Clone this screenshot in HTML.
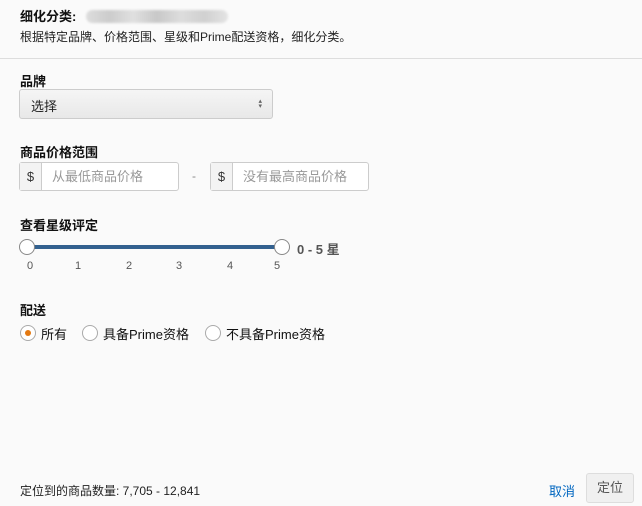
<!DOCTYPE html><html><head><meta charset="utf-8"><style>
body{margin:0;width:642px;height:506px;background:#fafafa;font-family:"Liberation Sans","Noto Sans CJK SC",sans-serif;color:#111;position:relative;overflow:hidden}
.a{position:absolute;white-space:nowrap}
.b{font-weight:bold;font-size:13px}
.in{position:absolute;height:29px;border:1px solid #ccc;border-radius:3px;background:#fff;box-sizing:border-box}
.in .d{position:absolute;left:0;top:0;bottom:0;width:21px;background:#f3f3f3;border-right:1px solid #ccc;font-size:13px;text-align:center;line-height:27px;color:#333}
.in .p{position:absolute;left:32px;top:0;line-height:27px;font-size:13px;color:#999}
.r{position:absolute;width:16px;height:16px;border:1px solid #aaa;border-radius:50%;background:#fff;box-sizing:border-box}
.n{position:absolute;top:260px;font-size:11px;color:#555}
</style></head><body>
<div class="a b" style="left:20px;top:6px">细化分类:</div>
<div class="a" style="left:86px;top:10px;width:142px;height:13px;border-radius:7px;background:linear-gradient(90deg,#ddd,#ccc,#e0e0e0,#c8c8c8,#ddd,#d0d0d0,#e4e4e4);filter:blur(1px)"></div>
<div class="a" style="left:20px;top:28px;font-size:12px;color:#222">根据特定品牌、价格范围、星级和Prime配送资格，细化分类。</div>
<div class="a" style="left:0;top:58px;width:642px;height:1px;background:#ddd"></div>
<div class="a b" style="left:20px;top:71px">品牌</div>
<div class="a" style="left:19px;top:89px;width:254px;height:30px;box-sizing:border-box;border:1px solid #ccc;border-radius:3px;background:linear-gradient(#f5f5f5,#e8e8e8)"><span class="a" style="left:11px;top:6px;font-size:13px;color:#222">选择</span><span class="a" style="right:10px;top:9px;font-size:7px;color:#666;line-height:5px">▴<br>▾</span></div>
<div class="a b" style="left:20px;top:142px">商品价格范围</div>
<div class="in" style="left:19px;top:162px;width:160px"><div class="d">$</div><div class="p">从最低商品价格</div></div>
<div class="a" style="left:192px;top:169px;font-size:12px;color:#888">-</div>
<div class="in" style="left:210px;top:162px;width:159px"><div class="d">$</div><div class="p">没有最高商品价格</div></div>
<div class="a b" style="left:20px;top:215px">查看星级评定</div>
<div class="a" style="left:27px;top:245px;width:255px;height:4px;background:#33618f"></div>
<div class="r" style="left:19px;top:239px;border-color:#888"></div>
<div class="r" style="left:274px;top:239px;border-color:#888"></div>
<div class="a" style="left:297px;top:239px;font-size:13px;font-weight:bold;color:#555">0 - 5 星</div>
<div class="n" style="left:27px">0</div><div class="n" style="left:75px">1</div><div class="n" style="left:126px">2</div><div class="n" style="left:176px">3</div><div class="n" style="left:227px">4</div><div class="n" style="left:274px">5</div>
<div class="a b" style="left:20px;top:300px">配送</div>
<div class="r" style="left:20px;top:325px"><div style="position:absolute;left:4px;top:4px;width:6px;height:6px;border-radius:50%;background:#e47911"></div></div>
<div class="a" style="left:41px;top:324px;font-size:13px">所有</div>
<div class="r" style="left:82px;top:325px"></div>
<div class="a" style="left:103px;top:324px;font-size:13px">具备Prime资格</div>
<div class="r" style="left:205px;top:325px"></div>
<div class="a" style="left:226px;top:324px;font-size:13px">不具备Prime资格</div>
<div class="a" style="left:20px;top:482px;font-size:12px;color:#222">定位到的商品数量: 7,705 - 12,841</div>
<div class="a" style="left:549px;top:481px;font-size:13px;color:#0066c0">取消</div>
<div class="a" style="left:586px;top:473px;width:48px;height:30px;box-sizing:border-box;border:1px solid #ddd;border-radius:3px;background:#f0f0f0;text-align:center;line-height:28px;font-size:13px;color:#555">定位</div>
</body></html>
